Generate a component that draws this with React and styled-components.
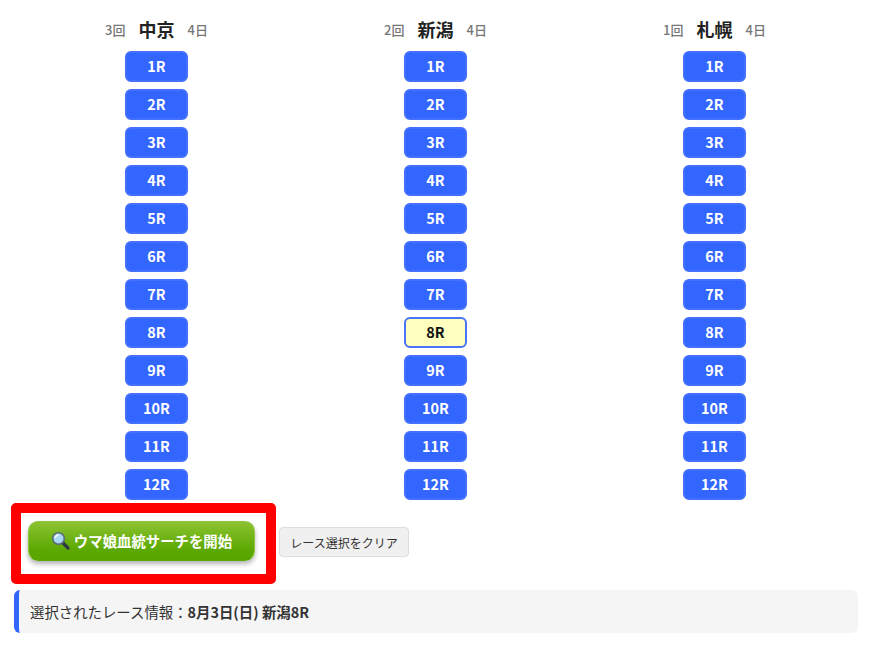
import React from "react";
import styled, { createGlobalStyle } from "styled-components";

const GlobalStyle = createGlobalStyle`
  html, body { margin: 0; padding: 0; background: #fff; }
  body { font-family: "Noto Sans CJK JP", "Noto Sans", sans-serif; color: #333; }
`;

const Page = styled.div`
  width: 869px;
  height: 645px;
  overflow: hidden;
  padding: 14px 11px 0 14px;
  box-sizing: border-box;
`;

const Venues = styled.div`
  display: grid;
  grid-template-columns: repeat(3, 279px);
  margin-left: 3px;
`;

const Venue = styled.div`
  display: flex;
  flex-direction: column;
  align-items: center;
`;

const VenueHead = styled.div`
  display: flex;
  align-items: center;
  justify-content: center;
  gap: 13px;
  height: 31px;
  margin-bottom: 6px;
`;

const VenueName = styled.span`
  font-size: 18px;
  font-weight: 700;
  color: #222;
  position: relative;
  top: -1px;
`;

const VenueMeta = styled.span`
  font-size: 13px;
  font-weight: 500;
  color: #777;
`;

const RaceList = styled.div`
  display: flex;
  flex-direction: column;
  gap: 7px;
`;

const RaceButton = styled.button`
  width: 63px;
  height: 31px;
  box-sizing: border-box;
  padding: 0 0 1px;
  border-radius: 6px;
  border: 2px solid ${(p) => (p.$active ? "#4a74f8" : "#4470ff")};
  background: ${(p) => (p.$active ? "#ffffc0" : "#3366ff")};
  color: ${(p) => (p.$active ? "#111" : "#fff")};
  font-family: inherit;
  font-size: 14.4px;
  font-weight: 700;
  line-height: 1;
`;

const Actions = styled.div`
  position: relative;
  display: flex;
  align-items: center;
  height: 40px;
  margin-top: 21px;
  padding-left: 14px;
`;

const SearchButton = styled.button`
  width: 227px;
  height: 40px;
  display: flex;
  align-items: center;
  justify-content: center;
  gap: 4px;
  padding: 0 0 1px;
  border: 1px solid #8fc43c;
  border-bottom-color: #5aa800;
  border-radius: 10px;
  box-sizing: border-box;
  background: linear-gradient(180deg, #8cc232 0%, #5aa800 75%, #58a500 100%);
  box-shadow: 0 3px 5px rgba(0, 0, 0, 0.3);
  color: #fff;
  font-family: inherit;
  font-size: 14.4px;
  font-weight: 700;
`;

const ClearButton = styled.button`
  width: 130px;
  height: 30px;
  margin: 2px 0 0 24px;
  padding: 0;
  border: 1px solid #ddd;
  border-radius: 4px;
  background: #f0f0f0;
  color: #333;
  font-family: inherit;
  font-size: 12px;
`;

const Highlight = styled.div`
  position: absolute;
  left: -3px;
  top: -18px;
  width: 265px;
  height: 81px;
  box-sizing: border-box;
  border: 10px solid #ff0000;
  border-radius: 5px;
  pointer-events: none;
`;

const Info = styled.div`
  display: flex;
  align-items: center;
  height: 43px;
  margin-top: 29px;
  padding-left: 11px;
  border-left: 5px solid #3366ff;
  border-radius: 6px;
  background: #f5f5f5;
  font-size: 14.4px;
  color: #333;
`;

const Strong = styled.strong`
  font-weight: 700;
`;

const SearchIcon = () => (
  <svg width="19" height="19" viewBox="0 0 19 19">
    <path d="M11.5 11.5 L17 17" stroke="#2f3a44" strokeWidth="3.2" strokeLinecap="round" />
    <circle cx="7.5" cy="7.5" r="5.8" fill="#a9d8f2" stroke="#5b6b75" strokeWidth="1.6" />
    <path d="M4.2 7 A3.6 3.6 0 0 1 7.5 4" fill="none" stroke="#fff" strokeWidth="1.3" />
  </svg>
);

const venues = [
  { round: "3回", name: "中京", day: "4日" },
  { round: "2回", name: "新潟", day: "4日", selected: 8 },
  { round: "1回", name: "札幌", day: "4日" },
];

const races = Array.from({ length: 12 }, (_, i) => i + 1);

export default function App() {
  return (
    <Page>
      <GlobalStyle />
      <Venues>
        {venues.map((v) => (
          <Venue key={v.name}>
            <VenueHead>
              <VenueMeta>{v.round}</VenueMeta>
              <VenueName>{v.name}</VenueName>
              <VenueMeta>{v.day}</VenueMeta>
            </VenueHead>
            <RaceList>
              {races.map((r) => (
                <RaceButton key={r} $active={v.selected === r}>
                  {r}R
                </RaceButton>
              ))}
            </RaceList>
          </Venue>
        ))}
      </Venues>
      <Actions>
        <SearchButton>
          <SearchIcon />
          ウマ娘血統サーチを開始
        </SearchButton>
        <ClearButton>レース選択をクリア</ClearButton>
        <Highlight />
      </Actions>
      <Info>
        選択されたレース情報：<Strong>8月3日(日) 新潟8R</Strong>
      </Info>
    </Page>
  );
}
